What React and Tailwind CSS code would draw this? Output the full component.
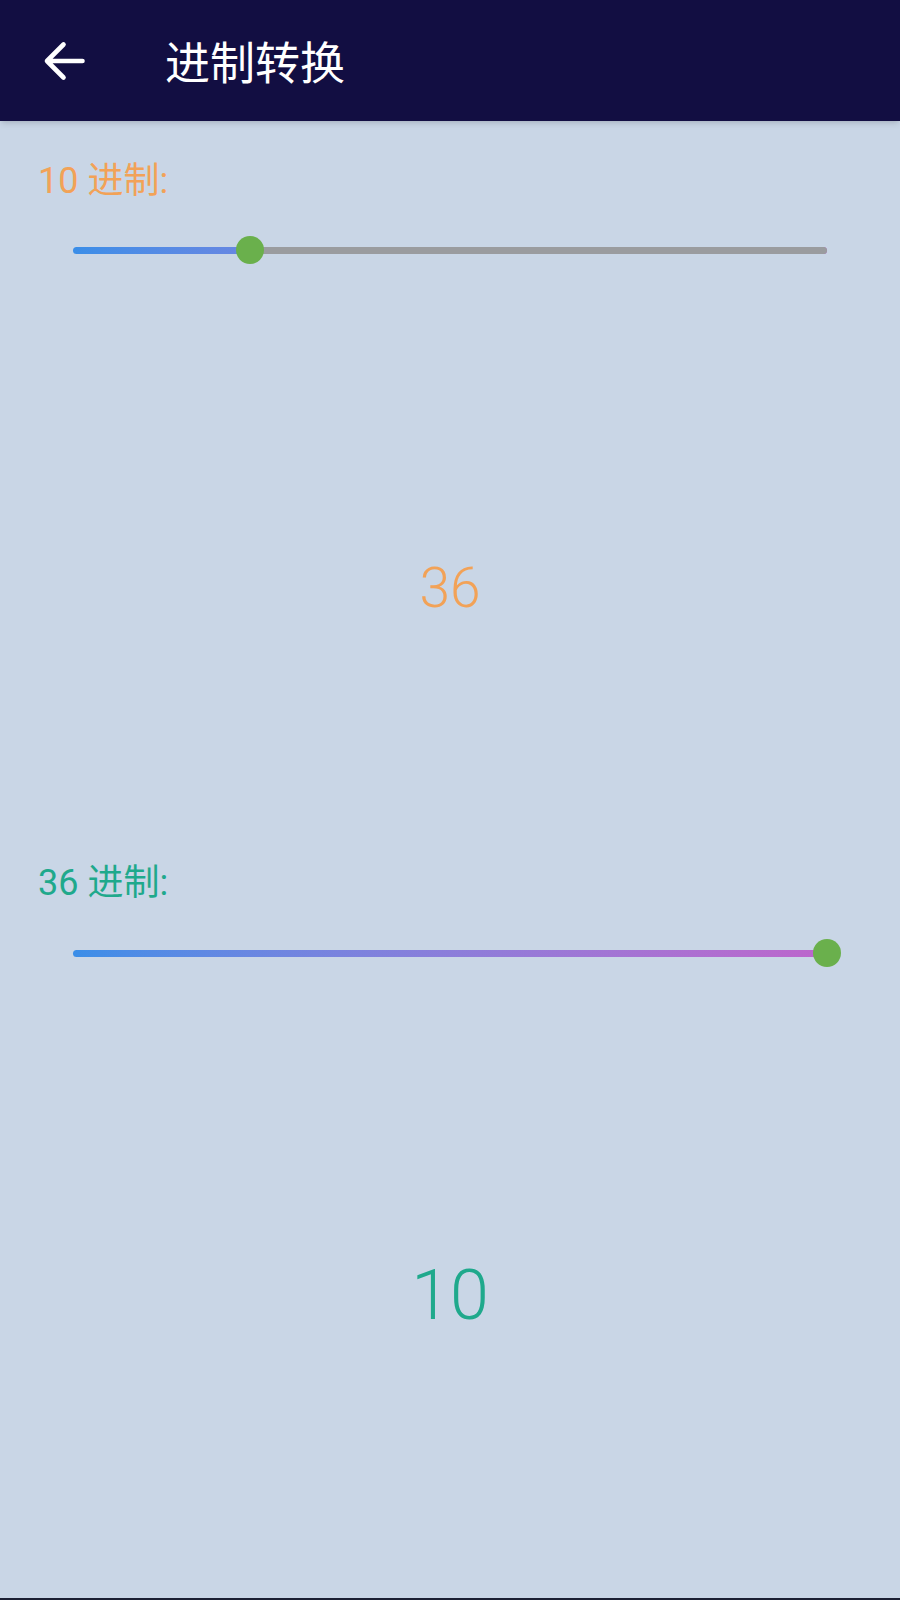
import { useState } from "react";

const MIN = 2;
const MAX = 36;

function BaseSlider({ value, onChange }) {
  const pct = ((value - MIN) / (MAX - MIN)) * 100;

  const handleClick = (e) => {
    const rect = e.currentTarget.getBoundingClientRect();
    const ratio = Math.min(1, Math.max(0, (e.clientX - rect.left) / rect.width));
    onChange(Math.round(MIN + ratio * (MAX - MIN)));
  };

  return (
    <div className="mx-[73px] flex h-[28px] items-center cursor-pointer" onClick={handleClick}>
      <div className="relative h-[7px] w-full rounded-full bg-gradient-to-r from-[#3a8ee8] to-[#bd66cc]">
        {/* inactive part of the track */}
        <div
          className="absolute right-0 top-0 h-full rounded-r-full bg-[#9a9c9f]"
          style={{ width: `${100 - pct}%` }}
        />
        {/* thumb */}
        <div
          className="absolute top-1/2 h-[28px] w-[28px] -translate-x-1/2 -translate-y-1/2 rounded-full bg-[#6ab04c]"
          style={{ left: `${pct}%` }}
        />
      </div>
    </div>
  );
}

export default function App() {
  const [from, setFrom] = useState(10);
  const [to, setTo] = useState(36);

  return (
    <div
      className="flex h-[1600px] w-full flex-col bg-[#c9d6e6]"
      style={{ fontFamily: 'Roboto, "Noto Sans CJK SC", sans-serif' }}
    >
      {/* App bar */}
      <header className="relative z-10 flex h-[121px] shrink-0 items-center bg-[#120e42] shadow-md">
        <button className="ml-[43px] flex h-[40px] w-[42px] items-center justify-center">
          <svg width="42" height="40" viewBox="0 0 42 40" fill="none">
            <path
              d="M39.5 20H4M20.5 3.5L4 20l16.5 16.5"
              stroke="white"
              strokeWidth="4.6"
              strokeLinecap="round"
              strokeLinejoin="round"
            />
          </svg>
        </button>
        <h1
          className="ml-[80px] text-[45px] leading-none text-white"
          style={{ fontFamily: '"Noto Sans CJK SC", sans-serif' }}
        >
          进制转换
        </h1>
      </header>

      <main className="flex-1 pt-[40px]">
        {/* from base */}
        <p className="pl-[38px] text-[36px] leading-[40px] text-[#f2a257]">{from} 进制:</p>
        <div className="mt-[35px]">
          <BaseSlider value={from} onChange={setFrom} />
        </div>
        <p className="mt-[292px] text-center text-[55px] font-light leading-[64px] text-[#f2a257]">
          {to}
        </p>

        {/* to base */}
        <p className="mt-[243px] pl-[38px] text-[36px] leading-[40px] text-[#1fa98c]">{to} 进制:</p>
        <div className="mt-[36px]">
          <BaseSlider value={to} onChange={setTo} />
        </div>
        <p className="mt-[286px] text-center text-[70px] font-light leading-[84px] text-[#1fa98c]">
          {from}
        </p>
      </main>

      <div className="h-[2px] shrink-0 bg-[#1b2033]" />
    </div>
  );
}
